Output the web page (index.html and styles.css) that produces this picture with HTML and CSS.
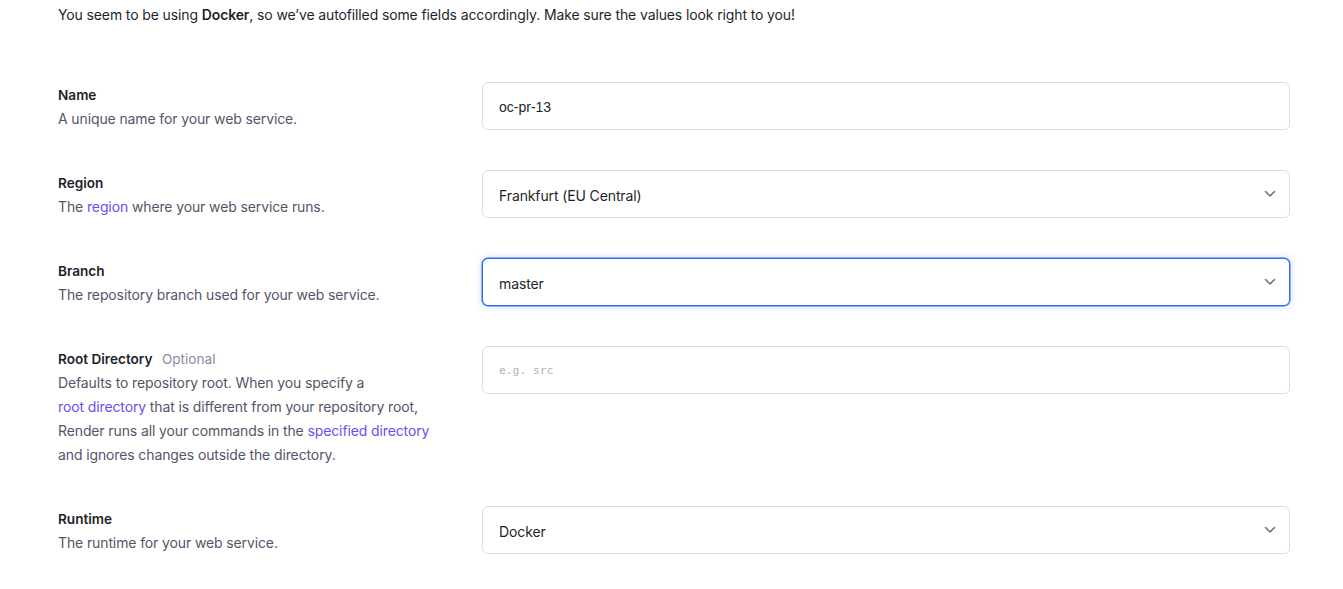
FILE: index.html
```html
<!DOCTYPE html>
<html lang="en">
<head>
<meta charset="utf-8">
<title>Web service settings</title>
<link rel="stylesheet" href="styles.css">
</head>
<body>
<div class="page">
  <p class="intro">You seem to be using <strong>Docker</strong>, so we’ve autofilled some fields accordingly. Make sure the values look right to you!</p>
  <div class="form">
    <div class="row">
      <div class="info">
        <div class="label">Name</div>
        <div class="desc">A unique name for your web service.</div>
      </div>
      <div class="field"><input class="input arial" type="text" value="oc-pr-13"></div>
    </div>
    <div class="row">
      <div class="info">
        <div class="label">Region</div>
        <div class="desc">The <a href="#">region</a> where your web service runs.</div>
      </div>
      <div class="field">
        <div class="select"><span>Frankfurt (EU Central)</span>
          <svg class="chev" width="12" height="8" viewBox="0 0 12 8"><path d="M1.5 1.5 6 6l4.5-4.5" fill="none" stroke="currentColor" stroke-width="1.6" stroke-linecap="round" stroke-linejoin="round"/></svg>
        </div>
      </div>
    </div>
    <div class="row">
      <div class="info">
        <div class="label">Branch</div>
        <div class="desc">The repository branch used for your web service.</div>
      </div>
      <div class="field">
        <div class="select focus"><span>master</span>
          <svg class="chev" width="12" height="8" viewBox="0 0 12 8"><path d="M1.5 1.5 6 6l4.5-4.5" fill="none" stroke="currentColor" stroke-width="1.6" stroke-linecap="round" stroke-linejoin="round"/></svg>
        </div>
      </div>
    </div>
    <div class="row">
      <div class="info">
        <div class="label">Root Directory <span class="opt">Optional</span></div>
        <div class="desc">Defaults to repository root. When you specify a<br><a href="#">root directory</a> that is different from your repository root,<br>Render runs all your commands in the <a href="#">specified directory</a><br>and ignores changes outside the directory.</div>
      </div>
      <div class="field"><input class="input mono" type="text" placeholder="e.g. src"></div>
    </div>
    <div class="row">
      <div class="info">
        <div class="label">Runtime</div>
        <div class="desc">The runtime for your web service.</div>
      </div>
      <div class="field">
        <div class="select"><span>Docker</span>
          <svg class="chev" width="12" height="8" viewBox="0 0 12 8"><path d="M1.5 1.5 6 6l4.5-4.5" fill="none" stroke="currentColor" stroke-width="1.6" stroke-linecap="round" stroke-linejoin="round"/></svg>
        </div>
      </div>
    </div>
  </div>
</div>
</body>
</html>
```
FILE: styles.css
```css
* { box-sizing: border-box; }
html, body { margin: 0; background: #fff; }
body {
  font-family: Inter, "Noto Sans", sans-serif;
  font-size: 14px;
  line-height: 24px;
  letter-spacing: -0.12px;
  color: #1f1f2b;
}
.page { padding: 3px 0 0 58px; }
.intro { margin: 0; color: #1f1f2b; }
.intro strong { font-weight: 600; }
.form {
  margin-top: 55px;
  display: flex;
  flex-direction: column;
  gap: 39px;
}
.row {
  display: grid;
  grid-template-columns: 424px 808px;
  align-items: start;
}
.info { padding-top: 1px; }
.label { font-size: 13.6px; font-weight: 600; color: #1f1f2b; letter-spacing: 0; }
.opt { font-weight: 400; color: #8a8aa0; margin-left: 6px; }
.desc { color: #55556a; }
.desc a { color: #6a4ff0; text-decoration: none; }
.input, .select {
  display: flex;
  align-items: center;
  width: 100%;
  height: 48px;
  border: 1px solid #d5ddef;
  border-radius: 6px;
  padding: 1px 16px 0;
  background: #fff;
  font-size: 14px;
  color: #1f1f2b;
  outline: none;
}
.arial { font-family: "Liberation Sans", Arial, sans-serif; letter-spacing: 0; }
.mono { font-family: "DejaVu Sans Mono", monospace; font-size: 11.3px; letter-spacing: 0; }
.mono::placeholder { color: #a9b3c7; }
.select {
  justify-content: space-between;
  padding-top: 3px;
  font-family: Inter, "Noto Sans", sans-serif;
}
.select.focus {
  border-color: #2f6bf0;
  box-shadow: 0 0 0 0.5px #2f6bf0, 0 0 6px 2px rgba(47, 107, 240, 0.16);
}
.chev { color: #6f7180; margin-right: -3px; margin-top: -3px; }
```
